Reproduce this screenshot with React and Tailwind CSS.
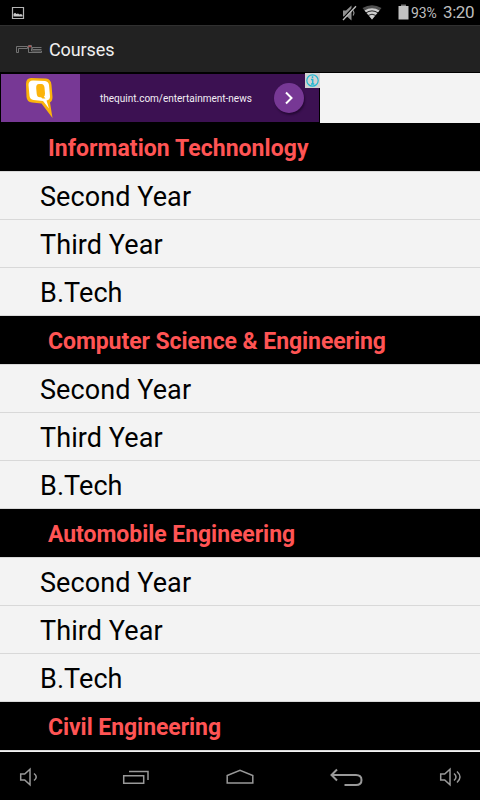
const years = ["Second Year", "Third Year", "B.Tech"];

const courses = [
  { name: "Information Technonlogy", years, spacing: "tracking-[0.05px]" },
  { name: "Computer Science & Engineering", years, spacing: "tracking-[-0.07px]" },
  { name: "Automobile Engineering", years, spacing: "tracking-[-0.05px]" },
  { name: "Civil Engineering", years: [], spacing: "tracking-[-0.06px]" },
];

const StatusBar = () => {
  return (
    <div className="flex h-[25px] shrink-0 items-center bg-black text-[#bebebe]">
      <svg className="ml-[11px] mt-px" width="14" height="14" viewBox="0 0 14 14">
        <path d="M1.500 1.500h11v11h-11z" fill="none" stroke="#b4b4b4" strokeWidth="1.200" />
        <path d="M2.500 10.500V8L4 6.800 5.500 8 7 7.500l1.500 1L10 8l1.500 1v1.500z" fill="#c8c8c8" />
      </svg>
      <svg className="ml-auto" width="15" height="18" viewBox="0 0 15 18">
        <path d="M1 6.500h3L9.500 1.500v15L5 12.500H1z" fill="#8f8f8f" />
        <path d="M11.200 6.500q1.600 2.500 0 5" fill="none" stroke="#8f8f8f" strokeWidth="1.300" />
        <path d="M12.800 1.800 .500 15" stroke="#000" strokeWidth="1.500" />
        <path d="M14 2.200 1 16" stroke="#bebebe" strokeWidth="1.300" />
      </svg>
      <svg className="ml-[5px] -mt-px" width="20" height="16" viewBox="0 0 20 16">
        <path d="M10 15.500 .500 4Q10-1.500 19.500 4z" fill="#505050" />
        <path d="M10 15.500 2.500 6.500Q10 2 17.500 6.500z" fill="#cecece" />
        <path d="M4 8.800q6-3.800 12 0M6 11.500q4-2.600 8 0" fill="none" stroke="#222" strokeWidth="1" />
      </svg>
      <svg className="ml-[16px] -mt-[2px]" width="11" height="16" viewBox="0 0 11 16">
        <path d="M3 .500h5V2H3z" fill="#777" />
        <path d="M.500 2h10v13.500H.500z" fill="#c2c2c2" />
      </svg>
      <span className="ml-[2px] w-[28px] text-[14px] leading-none tracking-[-0.1px]">93%</span>
      <span className="ml-[4px] mr-[5px] w-[32px] text-[17px] leading-none tracking-[-0.4px]">3:20</span>
    </div>
  );
};

const ActionBar = () => {
  return (
    <div className="flex h-[48px] shrink-0 items-center border-b border-t border-b-black border-t-[#303030] bg-[#222]">
      <svg className="ml-[15px]" width="28" height="12" viewBox="0 0 28 12">
        <path
          d="M1.500 9.500v-6h11v2h-9v4zM13.500 9.500v-7h3v2h10M26.500 6.500h-9v-1h-1v2.500M13.500 9.500h13v-1.500h-10"
          fill="none"
          stroke="#7c7c7c"
          strokeWidth="0.900"
        />
        <path d="M13.500 3.500h2.500" stroke="#b54848" strokeWidth="1.500" />
      </svg>
      <h1 className="ml-[6px] pt-[2px] text-[18px] leading-none tracking-[-0.1px] text-[#f0f0f0]">Courses</h1>
    </div>
  );
};

const AdBanner = () => {
  return (
    <div className="flex h-[50px] shrink-0 bg-[#f3f3f3]">
      <div className="relative flex w-[320px] border border-black bg-[#3c1152]">
        <div className="w-[79px] bg-[#773895]">
          <svg className="ml-[24px] mt-[3px]" width="30" height="43" viewBox="0 0 30 43">
            <path
              d="M6 1 21 1.500Q26 2 26.500 8L27.500 20Q27.500 24 25 25.500L27.500 41 16.500 26.500 7 25.500Q2 25 1.500 20L1 7Q1 1 6 1z"
              fill="#fbb40c"
            />
            <path
              d="M8 3.500 20 4Q23.500 4.500 24 8L25 19.500Q25 23 21.500 23.500L24 31.500 18 24 8.500 23Q5 22.500 4.500 19L3.500 8Q3.500 3.500 8 3.500z"
              fill="#fff"
            />
            <path
              d="M14 7h2.500q2.500 0 3 3.500l.500 6q0 2.500-1.200 3l1.700 2h-3l-1.500-1.300h-1q-3 0-3.300-3.500l-.500-5.500Q11 7 14 7z"
              fill="#fbb40c"
            />
          </svg>
        </div>
        <span className="ml-[20px] self-center whitespace-nowrap text-[10px] text-[#f3eef5]">
          thequint.com/entertainment-news
        </span>
        <div className="absolute left-[273px] top-[9px] flex h-[30px] w-[30px] items-center justify-center rounded-full bg-[#773895] shadow-[1px_2px_2px_#260936]">
          <svg width="10" height="14" viewBox="0 0 10 14">
            <path d="M2 1.500 7.500 7 2 12.500" fill="none" stroke="#fff" strokeWidth="2" />
          </svg>
        </div>
        <svg className="absolute -right-px -top-px" width="15" height="15" viewBox="0 0 15 15">
          <path d="M0 0h15v15H0z" fill="#d2d2d2" />
          <circle cx="7.500" cy="7.500" r="5.700" fill="none" stroke="#20b7d1" strokeWidth="1.200" />
          <path d="M7.500 3.200v1.800M6 6.500h1.700v4.500M6 11h3.300" fill="none" stroke="#20b7d1" strokeWidth="1.500" />
        </svg>
      </div>
    </div>
  );
};

const Course = ({ course }) => {
  return (
    <section>
      <h2
        className={`flex h-[49px] items-center border-b border-[#d8d8d8] bg-black pl-[48px] pt-[3px] text-[23px] font-bold leading-none text-[#ff5454] ${course.spacing}`}
      >
        {course.name}
      </h2>
      {course.years.map((year) => (
        <div
          key={year}
          className="flex h-[48px] items-center border-b border-[#d8d8d8] bg-[#f3f3f3] pl-[40px] pt-[3px] text-[27px] leading-none tracking-[0.08px] text-black"
        >
          {year}
        </div>
      ))}
    </section>
  );
};

const NavBar = () => {
  return (
    <div className="h-[48px] shrink-0 bg-black">
      <svg
        width="480"
        height="48"
        viewBox="0 752 480 48"
        fill="none"
        stroke="#999"
        strokeWidth="1.500"
      >
        <path d="M20.700 774h4l5.300-4.800v15.600L24.700 780h-4zM34 773.500q4.500 3.500 0 7" />
        <path d="M123.700 775.700h20v7.600h-20zM129 771.500h19v8.500" />
        <path d="M227.200 783v-7.500l12.800-5.200 12.800 5.200v7.500z" />
        <path d="M337 769.500l-5.500 5.500 5.500 5.500M332 775h24q5.500 0 5.500 5t-5.500 5h-11.500" strokeWidth="2" />
        <path d="M440.700 774h4l5.300-4.800v15.600l-5.300-4.800h-4zM454 773.500q4 3.500 0 7M457 771.500q6 5.500 0 11" />
      </svg>
    </div>
  );
};

const App = () => {
  return (
    <div className="flex h-[800px] w-[480px] flex-col overflow-hidden bg-black font-[Roboto,sans-serif]">
      <StatusBar />
      <ActionBar />
      <AdBanner />
      <main className="min-h-0 flex-1 overflow-hidden bg-[#f3f3f3]">
        {courses.map((course) => (
          <Course key={course.name} course={course} />
        ))}
      </main>
      <NavBar />
    </div>
  );
};

export default App;
